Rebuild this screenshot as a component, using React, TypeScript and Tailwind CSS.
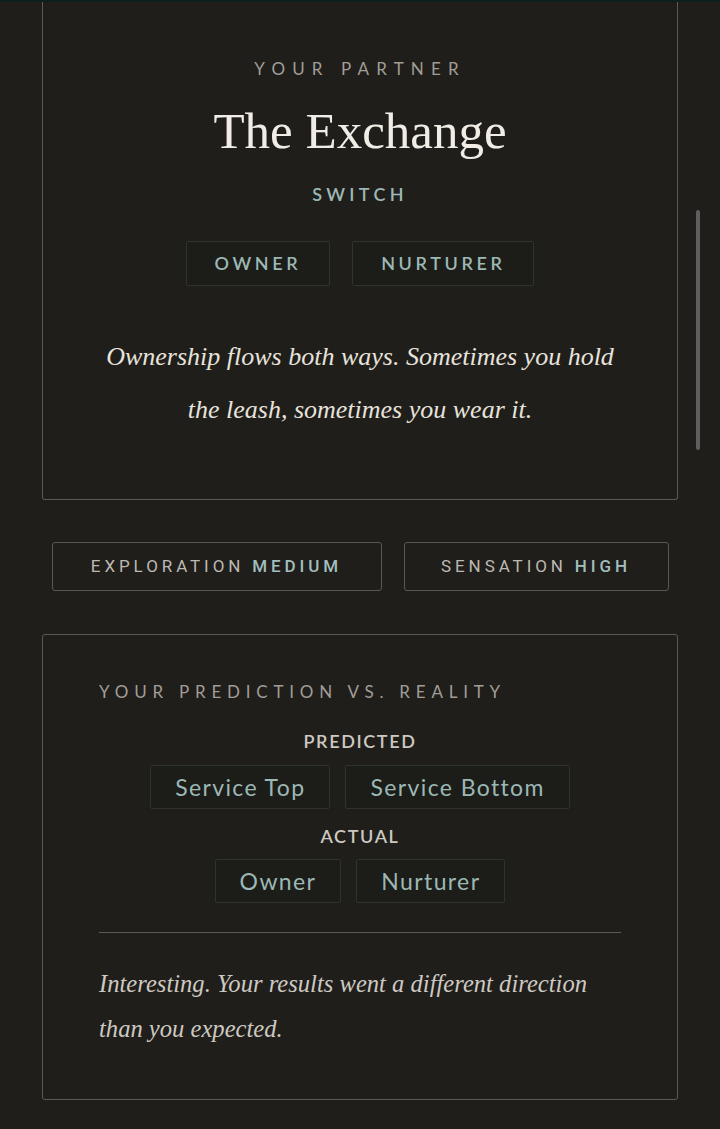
import React from "react";

const sans = "font-['Lato','Noto_Sans',sans-serif]";
const serif = "font-['Liberation_Serif','DejaVu_Serif',serif]";

function Tag({ label }: { label: string }) {
    return (
        <span className={`${sans} flex items-center justify-center h-[45px] px-7 border border-[#2e332f] bg-[#1c1c19] rounded-[2px] text-[18px] font-semibold tracking-[0.2em] text-[#9cb8b5]`}>
            {label}
        </span>
    );
}

function Trait({ name, level, width }: { name: string; level: string; width: string }) {
    return (
        <div className={`${width} h-[49px] flex items-center justify-center border border-[#5b5853] rounded-[3px] font-['Roboto',sans-serif] text-[17px] tracking-[0.23em]`}>
            <span className="text-[#bdb9b1]">{name}</span>
            <span className="ml-2 font-medium text-[#a3bfbd]">{level}</span>
        </div>
    );
}

function Chip({ label }: { label: string }) {
    return (
        <span className={`${sans} flex items-center justify-center h-[44px] px-6 border border-[#2e332f] bg-[#1c1c19] rounded-[2px] text-[23px] tracking-[0.06em] text-[#9cb8b5]`}>
            {label}
        </span>
    );
}

export default function App() {
    return (
        <div className="relative min-h-[1129px] bg-[#201e1b] border-t-2 border-[#0d201f] overflow-hidden">
            {/* scroll thumb */}
            <div className="absolute right-[20px] top-[208px] w-[4px] h-[240px] rounded-full bg-[#5e5e5e]"></div>

            <div className="px-[42px]">
                {/* Partner card */}
                <div className="border border-t-0 border-[#5b5853] rounded-b-[3px] pt-[58px] pb-[63px] flex flex-col items-center">
                    <p className={`${sans} text-[17px] tracking-[0.42em] text-[#a19d96] leading-none`}>YOUR PARTNER</p>
                    <h1 className={`${serif} mt-[29px] text-[51px] leading-none text-[#f1ede6]`}>The Exchange</h1>
                    <p className={`${sans} mt-[28px] text-[18px] font-semibold tracking-[0.24em] text-[#9cb8b5] leading-none`}>SWITCH</p>
                    <div className="mt-[38px] flex gap-[22px]">
                        <Tag label="OWNER" />
                        <Tag label="NURTURER" />
                    </div>
                    <p className={`${serif} italic mt-[44px] text-[26px] leading-[53px] text-[#e7e3dc] text-center max-w-[540px]`}>
                        Ownership flows both ways. Sometimes you hold the leash, sometimes you wear it.
                    </p>
                </div>

                {/* Trait pills */}
                <div className="mt-[42px] flex justify-center gap-[22px]">
                    <Trait name="EXPLORATION" level="MEDIUM" width="w-[330px]" />
                    <Trait name="SENSATION" level="HIGH" width="w-[265px]" />
                </div>

                {/* Prediction card */}
                <div className="mt-[43px] border border-[#5b5853] rounded-[3px] px-[56px] pt-[48px] pb-[48px]">
                    <p className={`${sans} text-[17px] tracking-[0.34em] text-[#a19d96] leading-none`}>YOUR PREDICTION VS. REALITY</p>
                    <div className="mt-[32px] flex flex-col items-center">
                        <p className={`${sans} text-[18px] font-semibold tracking-[0.09em] text-[#cdc9c1] leading-none`}>PREDICTED</p>
                        <div className="mt-[15px] flex gap-[15px]">
                            <Chip label="Service Top" />
                            <Chip label="Service Bottom" />
                        </div>
                        <p className={`${sans} mt-[18px] text-[18px] font-semibold tracking-[0.09em] text-[#cdc9c1] leading-none`}>ACTUAL</p>
                        <div className="mt-[14px] flex gap-[15px]">
                            <Chip label="Owner" />
                            <Chip label="Nurturer" />
                        </div>
                    </div>
                    <div className="mt-[29px] h-px bg-[#5b5853]"></div>
                    <p className={`${serif} italic mt-[28px] text-[24.6px] leading-[45px] text-[#cdc9c1]`}>
                        Interesting. Your results went a different direction than you expected.
                    </p>
                </div>
            </div>
        </div>
    );
}
